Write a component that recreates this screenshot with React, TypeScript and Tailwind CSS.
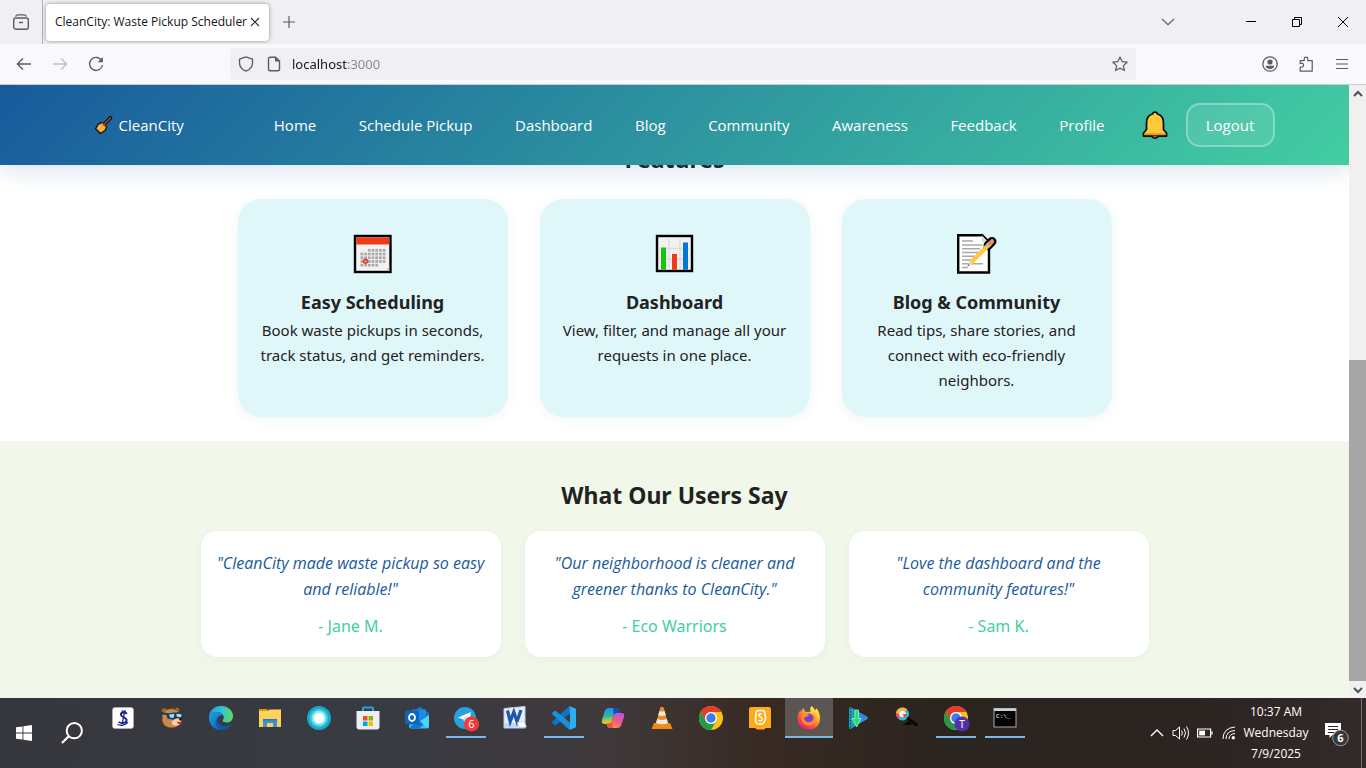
import type { ReactNode } from "react";

type IconProps = { children: ReactNode; box?: string; className?: string };

function Svg({ children, box = "0 0 24 24", className = "size-6" }: IconProps) {
  return (
    <svg viewBox={box} className={`overflow-visible ${className}`} fill="none" aria-hidden="true">
      {children}
    </svg>
  );
}

/* ---------- Browser frame ---------- */

function TabStrip() {
  return (
    <div className="flex h-11 items-center bg-[#f0eff4] font-['Open_Sans',sans-serif] text-[#5b5b66]">
      <button aria-label="Recent browsing" className="flex h-full w-[43px] items-center justify-center border-r border-[#b0afb6] pr-px">
        <Svg box="0 0 16 16" className="size-4">
          <path d="M2.600 2.600Q3 .8 5 .8h6q2 0 2.400 1.800" stroke="#5b5b66" strokeWidth="1.300" />
          <rect x=".7" y="4" width="14.600" height="11.200" rx="2" stroke="#5b5b66" strokeWidth="1.400" />
          <path d="M6 8.500h4" stroke="#5b5b66" strokeWidth="1.400" />
        </Svg>
      </button>
      <div className="ml-[3px] flex h-[37px] w-[223px] items-center justify-between rounded bg-white pl-[9px] pr-2 shadow-[0_0_4px_rgba(0,0,0,0.4)]">
        <span className="text-[12px] whitespace-nowrap text-[#15141a]">CleanCity: Waste Pickup Scheduler</span>
        <button aria-label="Close tab">
          <Svg box="0 0 16 16" className="size-4">
            <path d="m4 4 8 8M12 4l-8 8" stroke="#2b2a33" strokeWidth="1.100" />
          </Svg>
        </button>
      </div>
      <button aria-label="New tab" className="ml-3">
        <Svg box="0 0 16 16" className="size-4">
          <path d="M8 2v12M2 8h12" stroke="#5b5b66" strokeWidth="1.200" />
        </Svg>
      </button>
      <div className="ml-auto flex h-full">
        <button aria-label="List all tabs" className="mr-[37px] flex w-[46px] items-center justify-center">
          <Svg box="0 0 16 16" className="size-4">
            <path d="m2 5 6 5.600L14 5" stroke="#5b5b66" strokeWidth="1.200" />
          </Svg>
        </button>
        <button aria-label="Minimize" className="flex w-[46px] items-center justify-center">
          <Svg box="0 0 10 10" className="size-[10px]">
            <path d="M0 4.500h10" stroke="#000" />
          </Svg>
        </button>
        <button aria-label="Restore" className="flex w-[46px] items-center justify-center">
          <Svg box="0 0 10 10" className="size-[10px]">
            <path d="M.5 2.500h7v7h-7zM2.500 2.500v-2h7v7h-2" stroke="#000" />
          </Svg>
        </button>
        <button aria-label="Close" className="flex w-[46px] items-center justify-center">
          <Svg box="0 0 10 10" className="size-[10px]">
            <path d="m0 0 10 10M10 0 0 10" stroke="#000" strokeWidth="1" />
          </Svg>
        </button>
      </div>
    </div>
  );
}

function ToolButton({ label, children }: { label: string; children: ReactNode }) {
  return (
    <button aria-label={label} className="flex size-9 items-center justify-center">
      <Svg box="0 0 16 16" className="size-4">
        {children}
      </Svg>
    </button>
  );
}

function Toolbar() {
  return (
    <div className="flex h-[41px] items-center border-b border-[#cccccf] bg-[#f9f9fb] px-[6px]">
      <ToolButton label="Back">
        <path d="M15 8H1.500M7 2.400 1.400 8 7 13.600" stroke="#5b5b66" strokeWidth="1.400" />
      </ToolButton>
      <ToolButton label="Forward">
        <path d="M1 8h13.500M9 2.400 14.600 8 9 13.600" stroke="#bfbfc5" strokeWidth="1.400" />
      </ToolButton>
      <ToolButton label="Reload">
        <path d="M13.900 5A6.500 6.500 0 1 0 14.500 9" stroke="#5b5b66" strokeWidth="1.400" />
        <path d="M14.900 1v5.300H9.600z" fill="#5b5b66" />
      </ToolButton>
      <div className="mx-[116px] flex h-8 flex-1 items-center rounded bg-[#f0f0f4] px-2">
        <Svg box="0 0 16 16" className="size-4">
          <path d="M8 .9 14.500 3.200V7c0 4-2.600 6.600-6.500 8.200C4.100 13.600 1.500 11 1.500 7V3.200z" stroke="#5b5b66" strokeWidth="1.300" strokeLinejoin="round" />
        </Svg>
        <Svg box="0 0 16 16" className="ml-3 size-4">
          <path d="M9.500 1.200H4A1.500 1.500 0 0 0 2.500 2.700v10.600A1.500 1.500 0 0 0 4 14.800h8a1.500 1.500 0 0 0 1.500-1.500V5z" stroke="#5b5b66" strokeWidth="1.400" />
          <path d="M9 .8V5.500h5z" fill="#5b5b66" />
        </Svg>
        <input
          aria-label="Address"
          defaultValue="localhost:3000"
          className="ml-[10px] min-w-0 flex-1 bg-[linear-gradient(to_right,#15141a_56px,#85858d_56px)] bg-clip-text pt-[2px] text-[13px] text-transparent caret-black outline-none"
        />
        <button aria-label="Bookmark this page">
          <Svg box="0 0 16 16" className="size-4">
            <path d="m8 1 2.100 4.600 5 .6-3.700 3.400 1 5L8 12.100l-4.400 2.500 1-5L.9 6.200l5-.6z" stroke="#5b5b66" strokeWidth="1.200" strokeLinejoin="round" />
          </Svg>
        </button>
      </div>
      <ToolButton label="Account">
        <circle cx="8" cy="8" r="7.200" stroke="#5b5b66" strokeWidth="1.300" />
        <circle cx="8" cy="6" r="2.600" fill="#5b5b66" />
        <path d="M3.600 9.800h8.800Q11.500 13 8 13T3.600 9.800z" fill="#5b5b66" />
      </ToolButton>
      <ToolButton label="Extensions">
        <path d="M2.200 15.200V11h1.600a1.800 1.800 0 0 0 0-3.600H2.200V4.700h4V3a1.800 1.800 0 0 1 3.600 0v1.700h4.400v10.500z" stroke="#5b5b66" strokeWidth="1.200" strokeLinejoin="round" />
      </ToolButton>
      <ToolButton label="Open application menu">
        <path d="M2 3.500h12M2 8h12M2 12.500h12" stroke="#5b5b66" strokeWidth="1.200" />
      </ToolButton>
    </div>
  );
}

function ScrollBar() {
  return (
    <div className="flex w-[17px] shrink-0 flex-col bg-[#f0f0f0]">
      <div className="flex h-[17px] items-center justify-center">
        <Svg box="0 0 10 10" className="size-[10px]">
          <path d="m1 7 4-4 4 4" stroke="#505050" strokeWidth="2" />
        </Svg>
      </div>
      <div className="flex flex-1 flex-col">
        <div className="flex-[45]" />
        <div className="flex-[56] bg-[#a6a6a6]" />
      </div>
      <div className="flex h-[17px] items-center justify-center">
        <Svg box="0 0 10 10" className="size-[10px]">
          <path d="m1 3 4 4 4-4" stroke="#505050" strokeWidth="2" />
        </Svg>
      </div>
    </div>
  );
}

/* ---------- CleanCity page ---------- */

const links = ["Home", "Schedule Pickup", "Dashboard", "Blog", "Community", "Awareness", "Feedback", "Profile"];

function SiteHeader() {
  return (
    <header className="relative z-10 bg-[linear-gradient(135deg,#185a9d,#43cea2)] shadow-[0_4px_24px_rgba(24,90,157,0.18)]">
      <div className="mx-auto flex h-20 max-w-[1200px] items-center pl-5 font-['Open_Sans',sans-serif] text-[15px] text-white">
        <a href="#home" className="flex items-center gap-[6px]">
          <Svg box="0 0 18 18" className="size-[18px]">
            <path d="m9 8.500 6.500-6.700" stroke="#111" strokeWidth="3.800" strokeLinecap="round" />
            <path d="m7 6.400 4.600 4.500-1.500 3.600-4.600 3L.6 12.700l2.700-4.500z" fill="#f7a83c" stroke="#111" strokeWidth="1.300" strokeLinejoin="round" />
            <path d="m9 8.500 6.500-6.700" stroke="#8e562e" strokeWidth="1.500" strokeLinecap="round" />
            <path d="m3 12.500 3-3M5.500 14.500l3-3" stroke="#fbd27a" strokeWidth="1" />
            <path d="m6.600 7 4 4" stroke="#e25b28" strokeWidth="1.200" />
          </Svg>
          CleanCity
        </a>
        <nav className="ml-[90px] flex flex-1 justify-between">
          {links.map((link) => (
            <a key={link} href={`#${link.toLowerCase().replace(" ", "-")}`} className="whitespace-nowrap">
              {link}
            </a>
          ))}
        </nav>
        <button aria-label="Notifications" className="ml-[37px]">
          <Svg box="0 0 26 28" className="h-7 w-[26px]">
            <path d="M13 1.200q2 0 2.500 1.800c4.300 1.200 6 4.500 6 9v6.500l3 3.500v3H1.500v-3l3-3.500V12c0-4.500 1.700-7.800 6-9Q11 1.200 13 1.200z" fill="#ffc83d" stroke="#111" strokeWidth="1.800" strokeLinejoin="round" />
            <path d="M9.500 25.500q3.500 3.400 7 0z" fill="#9a5b2e" stroke="#111" strokeWidth="1.300" />
            <path d="M2.600 22.300h20.800v1.900H2.600z" fill="#e8960c" />
            <path d="M10.500 24.500h5q-.5 2-2.500 2t-2.500-2z" fill="#9a5b2e" />
          </Svg>
        </button>
        <button className="ml-[18px] h-11 w-[89px] rounded-[14px] border-2 border-white/30 bg-white/10">Logout</button>
      </div>
    </header>
  );
}

function CalendarIcon() {
  const dots = [
    [2, 3, 4, 5, 6],
    [0, 1, 2, 3, 4, 5, 6],
    [0, 1, 2, 3, 4, 5, 6],
    [0, 1, 2, 3, 4, 5, 6],
    [0, 1, 2, 3, 4],
  ];
  return (
    <Svg box="0 0 40 40" className="size-10">
      <rect x="2" y="2" width="35.500" height="36" fill="#f2f2f2" stroke="#000" strokeWidth="2.400" />
      <path d="M3.200 3.200h33v7.300h-33z" fill="#f03a17" />
      <path d="M32 36.800q3-1.500 4.300-5v5z" fill="#c4c4c4" />
      {dots.map((row, y) =>
        row.map((x) => <rect key={`${x}-${y}`} x={7.500 + x * 3.700} y={15 + y * 3.700} width="2.700" height="2.700" fill="#a8a8a8" />)
      )}
      <circle cx="12.500" cy="27.300" r="2" stroke="#f03a17" strokeWidth="1.500" />
    </Svg>
  );
}

function ChartIcon() {
  return (
    <Svg box="0 0 40 40" className="size-10">
      <rect x="2" y="2" width="35" height="35" fill="#f2f2f2" stroke="#000" strokeWidth="2.400" />
      <path d="M14 3.200v32.600M25 3.200v32.600M3.200 14.500h32.600M3.200 25h32.600" stroke="#dedede" strokeWidth="1.500" />
      <path d="M6 13.500h5v22.300H6z" fill="#16c60c" />
      <path d="M17 20h5v15.800h-5z" fill="#f03a17" />
      <path d="M28 8.500h5v27.300h-5z" fill="#0078d7" />
    </Svg>
  );
}

function MemoIcon() {
  return (
    <Svg box="0 0 42 42" className="size-[42px]">
      <path d="M2.200 2.200h24L33 9v30.500H2.200z" fill="#fff" stroke="#000" strokeWidth="2.400" />
      <path d="M26 2.500v6.700h6.500" fill="#ddd" />
      <path d="M6 8h11M6 12h20M6 15.700h18M6 19.500h18M6 23.300h16M6 27h14M6 30.800h21M6 34.500h6" stroke="#a9a9a9" strokeWidth="1.400" />
      <path d="M32 12.500 36 8.500" stroke="#000" strokeWidth="9" strokeLinecap="round" />
      <path d="m15.500 29 16-16" stroke="#ffc83d" strokeWidth="4.500" />
      <path d="m31.500 13 2.500-2.500" stroke="#c9ccd0" strokeWidth="4.700" />
      <path d="m34 10.500 2-2" stroke="#f08a6c" strokeWidth="4.500" strokeLinecap="round" />
      <path d="m13.900 27.400-2.400 5.800 5.600-2.600z" fill="#f8d0ae" />
      <path d="m12.300 31.200-.8 2 1.900-.8z" fill="#333" />
    </Svg>
  );
}

const features = [
  { icon: <CalendarIcon />, title: "Easy Scheduling", text: "Book waste pickups in seconds, track status, and get reminders." },
  { icon: <ChartIcon />, title: "Dashboard", text: "View, filter, and manage all your requests in one place." },
  { icon: <MemoIcon />, title: "Blog & Community", text: "Read tips, share stories, and connect with eco-friendly neighbors." },
];

const quotes = [
  { text: "\"CleanCity made waste pickup so easy and reliable!\"", author: "Jane M." },
  { text: "\"Our neighborhood is cleaner and greener thanks to CleanCity.\"", author: "Eco Warriors" },
  { text: "\"Love the dashboard and the community features!\"", author: "Sam K." },
];

function Page() {
  return (
    <div className="flex min-w-0 flex-1 flex-col overflow-hidden bg-white text-[#222]">
      <SiteHeader />
      <section className="-mt-[26px] px-5 pb-6 text-center">
        <h2 className="mb-5 text-[23px] leading-10 font-bold">Features</h2>
        <div className="flex justify-center gap-8">
          {features.map((feature) => (
            <article key={feature.title} className="w-[270px] rounded-3xl bg-[#e0f7fa] px-5 pt-[23px] pb-6 shadow-[0_2px_12px_rgba(24,90,157,0.07)]">
              <div className="flex h-16 items-center justify-center">{feature.icon}</div>
              <h3 className="text-lg leading-8 font-bold">{feature.title}</h3>
              <p className="text-[15px] leading-[25px]">{feature.text}</p>
            </article>
          ))}
        </div>
      </section>
      <section className="flex-1 bg-[#f1f8e9] px-5 pt-[34px] pb-10 text-center">
        <h2 className="mb-4 text-[23px] leading-10 font-bold">What Our Users Say</h2>
        <div className="flex justify-center gap-6">
          {quotes.map((quote) => (
            <figure key={quote.author} className="w-[300px] rounded-2xl bg-white px-3 py-[19px] text-[16px] shadow-[0_2px_8px_rgba(24,90,157,0.05)]">
              <blockquote className="mb-3 px-0 font-['Open_Sans',sans-serif] leading-[26px] text-[#185a9d] italic">{quote.text}</blockquote>
              <figcaption className="leading-6 text-[#43cea2]">- {quote.author}</figcaption>
            </figure>
          ))}
        </div>
      </section>
    </div>
  );
}

/* ---------- Desktop taskbar ---------- */

function ChromeMark() {
  return (
    <>
      <circle cx="12" cy="12" r="12" fill="#fbc116" />
      <path d="M1.600 6A12 12 0 0 1 22.400 6H12a6 6 0 0 0-5.200 3L6.800 15z" fill="#e33b2e" />
      <path d="M1.600 6A12 12 0 0 0 12 24l5.200-9A6 6 0 0 1 6.800 15z" fill="#24994a" />
      <circle cx="12" cy="12" r="6" fill="#fff" />
      <circle cx="12" cy="12" r="4.700" fill="#3b7ded" />
    </>
  );
}

type App = { name: string; open?: boolean; active?: boolean; art: ReactNode };

const apps: App[] = [
  {
    name: "Script editor",
    art: (
      <>
        <rect x="1.500" y="1.500" width="21" height="21" rx="2.500" fill="#fff" stroke="#b9b9b9" strokeWidth=".6" />
        <path d="M15.800 8c-.8-2.200-5.800-2-6 .6-.2 2.700 6 2.600 5.800 5.800-.2 3-5 3.200-8 1.600" stroke="#1c2391" strokeWidth="1.900" />
        <path d="M13.800 4.500 11.200 18M10.500 5.200h4.500M6.500 18.300c3 1.800 7.500 1 10.500-2" stroke="#1c2391" strokeWidth="1.300" />
      </>
    ),
  },
  {
    name: "Bear",
    art: (
      <>
        <circle cx="4.500" cy="5" r="3" fill="#b4743a" stroke="#5e3312" strokeWidth=".8" />
        <circle cx="17" cy="4" r="2.500" fill="#b4743a" stroke="#5e3312" strokeWidth=".8" />
        <path d="M3 6q7-6 15-1.500 3.500 4 4 9.500-2 7-10 8-8 0-10-7-.5-5 1-9z" fill="#c98a4b" stroke="#6a3c17" strokeWidth=".8" />
        <path d="m.5 6 8 1.200 11-1.200 3.500 2-.5 4.500-5.500-.5-4 1.800-5.500-1.300L6.500 9 .5 8z" fill="#173a66" />
        <path d="m9 8.500 5.500-.5-1 4-3.500-.5zM16.500 7.800l5 .4-.5 3-4.300-.5z" fill="#9fe2f7" />
        <path d="M11.500 16q3.500-4.500 9-3 2 3.500-1.500 6-6 2.500-7.500-3z" fill="#f6d2a2" />
        <circle cx="20.500" cy="13.300" r="1.400" fill="#2a1509" />
        <path d="m16.500 16 5-.3-2 3z" fill="#dc2222" />
      </>
    ),
  },
  {
    name: "Microsoft Edge",
    art: (
      <>
        <defs>
          <linearGradient id="edgeTop" x1="0" y1="8" x2="24" y2="10" gradientUnits="userSpaceOnUse">
            <stop stopColor="#2498dc" />
            <stop offset=".5" stopColor="#30c4d4" />
            <stop offset="1" stopColor="#61dc58" />
          </linearGradient>
          <linearGradient id="edgeLow" x1="0" y1="8" x2="16" y2="24" gradientUnits="userSpaceOnUse">
            <stop stopColor="#1b9de2" />
            <stop offset="1" stopColor="#0b5cad" />
          </linearGradient>
        </defs>
        <path d="M0 11.500C0 4.500 5.200 0 12 0c7 0 12 4.500 12 10.200 0 4-3 6.300-6.300 6.300-2.700 0-4.200-1-4.200-1.900 0-.8 1.300-1.400 1.300-3.100C14.800 8.500 12 6 8 6 3.500 6 0 9 0 11.500z" fill="url(#edgeTop)" />
        <path d="M0 12c0-4 4-6 8-6 3 0 6 1.500 6.600 4C13 8.500 9 9.500 8.200 14c-.6 4.500 3.800 8 8.800 7.500a12 12 0 0 1-5 2.500C5 24 0 18.500 0 12z" fill="url(#edgeLow)" />
        <path d="M9.500 11c-2 3-.5 9 6 9 3 0 5-1 7-2-2 4-6 6-10.500 6-5-2-8-9-2.500-13z" fill="#0c59a4" />
      </>
    ),
  },
  {
    name: "File Explorer",
    art: (
      <>
        <path d="M1 3h8l2 2H1z" fill="#d99a10" />
        <path d="M1 5h9l1.500-1.500H23V21H1z" fill="#ffd35c" />
        <path d="M1 8h22v13H1z" fill="#fdd05a" />
        <path d="M5 21v-8h14v8h-4v-4H9v4z" fill="#3a93da" />
        <path d="M5 13h14v1.500H5z" fill="#2276bd" />
      </>
    ),
  },
  {
    name: "Cortana",
    art: (
      <>
        <circle cx="12" cy="12" r="12" fill="#12a9cb" />
        <circle cx="12" cy="12" r="9.500" fill="#35c5dd" />
        <circle cx="12" cy="12" r="7.500" fill="#91e6ef" />
        <circle cx="12" cy="12" r="5.200" fill="#fff" />
      </>
    ),
  },
  {
    name: "Microsoft Store",
    art: (
      <>
        <path d="M7 6V2.500Q7 1.500 8 1.500h8q1 0 1 1V6" stroke="#25a7e5" strokeWidth="2" />
        <path d="M.5 5h23v15.500q0 3-3 3h-17q-3 0-3-3z" fill="#eeeeef" />
        <path d="M7 10h4.500v4.500H7z" fill="#f25022" />
        <path d="M12.500 10H17v4.500h-4.500z" fill="#7fba00" />
        <path d="M7 15.500h4.500V20H7z" fill="#00a4ef" />
        <path d="M12.500 15.500H17V20h-4.500z" fill="#ffb900" />
      </>
    ),
  },
  {
    name: "Outlook",
    art: (
      <>
        <path d="M6 7 15 .5 24 7v3H6z" fill="#1670c4" />
        <path d="M7 3.500h14v12H7z" fill="#1b8ce3" />
        <path d="M24 8v12q0 2.500-2.500 2.500H6q-2 0-2-2V13l11 3z" fill="#38c0f2" />
        <path d="M24 8 5 21q1 1.500 2.500 1.500H14L24 14z" fill="#1674cf" />
        <path d="m24 9-9 6 7 7.300q2-.3 2-2.300z" fill="#4bd5f8" />
        <rect y="4.500" width="14" height="14" rx="1.500" fill="#0f62bd" />
        <ellipse cx="7" cy="11.500" rx="3" ry="3.500" stroke="#fff" strokeWidth="1.800" />
      </>
    ),
  },
  {
    name: "Telegram",
    open: true,
    art: (
      <>
        <circle cx="11" cy="12" r="11" fill="#2ca0dc" />
        <path d="m4 11.500 13-5.500-2 11-4.500-3z" fill="#fff" />
        <path d="m9 13 6-5-4 6-.5 3z" fill="#b9d8eb" />
        <circle cx="17.500" cy="18" r="7.600" fill="#f13b3b" />
        <text x="17.500" y="22" fill="#fff" fontSize="11" textAnchor="middle" fontFamily="Noto Sans, sans-serif">6</text>
      </>
    ),
  },
  {
    name: "Word",
    art: (
      <>
        <path d="M1 2.500 22 .5V22H1z" fill="#e8effa" stroke="#b9cdea" />
        <path d="M1.500 17h20v4.500h-20z" fill="#c3d7f1" />
        <path d="m4.500 4.500 2.700 11L10.800 6l3.200 9.500L18 4" stroke="#1d57a7" strokeWidth="3.200" />
        <path d="m14 16.500 7-1 2.500 5.500H16z" fill="#fff" stroke="#a9c1e2" strokeWidth=".5" />
      </>
    ),
  },
  {
    name: "Visual Studio Code",
    open: true,
    art: (
      <>
        <path d="M17.500 0 .7 15.300 0 17l2.200 2L4 19 19 6.500z" fill="#0878c6" />
        <path d="M17.500 24 .7 8.700 0 7l2.200-2L4 5l15 12.500z" fill="#1691da" />
        <path d="M17.500 0 24 2.800v18.400L17.500 24l.5-6V6z" fill="#2bacf3" />
      </>
    ),
  },
  {
    name: "Copilot",
    art: (
      <>
        <defs>
          <linearGradient id="copA" x1="5" y1="2" x2="7" y2="18" gradientUnits="userSpaceOnUse">
            <stop stopColor="#238ee9" />
            <stop offset=".5" stopColor="#28b4ae" />
            <stop offset=".8" stopColor="#b5ce32" />
            <stop offset="1" stopColor="#f7bf28" />
          </linearGradient>
          <linearGradient id="copB" x1="20" y1="7" x2="12" y2="22" gradientUnits="userSpaceOnUse">
            <stop stopColor="#b657e8" />
            <stop offset=".5" stopColor="#ef5688" />
            <stop offset="1" stopColor="#ff9355" />
          </linearGradient>
        </defs>
        <path d="M8 2h7q2 0 2.700 2l.8 3h-3q-2 0-2.700 2l-2.300 7q-.7 2-2.500 2H3.500q-3.500 0-2.500-4L3.500 5.500Q4.500 2 8 2z" fill="url(#copA)" />
        <path d="M12 2h3q2 0 2.700 2l.8 3h-3q-2 0-2.700 2z" fill="#1648c3" />
        <path d="M16 22H9q-2 0-2.700-2l-.8-2.500H8q2 0 2.700-2l2.300-6.500q.7-2 2.500-2h5q3.500 0 2.500 4l-2.500 7.500Q19.500 22 16 22z" fill="url(#copB)" />
        <path d="M12 22H9q-2 0-2.700-2l-.8-2.500H8q2 0 2.700-2z" fill="#f34d45" />
      </>
    ),
  },
  {
    name: "VLC",
    art: (
      <>
        <path d="M4 17h16l2.500 6h-21z" fill="#f08a13" />
        <path d="M10.500 1h3l5 18q-6.500 3-13 0z" fill="#f58a1f" />
        <path d="m9.400 5-1.200 4.200q3.800 1.500 7.600 0L14.600 5q-2.600 1-5.200 0zM7.200 13l-1.200 4q6 2.500 12 0l-1.200-4q-4.800 2-9.600 0z" fill="#ececec" />
      </>
    ),
  },
  { name: "Chrome", art: <ChromeMark /> },
  {
    name: "Scratch",
    art: (
      <>
        <path d="M3 1h18q2 0 2 2v19h-5l-2 1.500H9L7 22H1V3q0-2 2-2z" fill="#ffab19" />
        <path d="M10 4.500h5q2.500 1 1.800 4 1.400 3 .2 6-1 3.800-5 3.800-4 0-4.500-3.300L8 7.500q0-2.500 2-3z" stroke="#fff" strokeWidth="1.600" />
        <path d="M14 8.500q-3-2-3.300.6c0 2 3.500 1.600 3.500 4-.3 2.600-3 2.300-3.700 1" stroke="#fff" strokeWidth="1.400" />
      </>
    ),
  },
  {
    name: "Firefox",
    open: true,
    active: true,
    art: (
      <>
        <defs>
          <linearGradient id="fox" x1="19" y1="2" x2="5" y2="22" gradientUnits="userSpaceOnUse">
            <stop stopColor="#fff04a" />
            <stop offset=".35" stopColor="#ffb02e" />
            <stop offset=".65" stopColor="#ff5a3a" />
            <stop offset="1" stopColor="#ee1d70" />
          </linearGradient>
        </defs>
        <path d="M14.500 0c2 1.300 3 3 3.500 4.500.8-.5 1-1.500 1-2.500 3 3 4 6.500 4 10.500C23 19 18.500 23.500 12 23.500S.5 19 .5 12.500C.5 9 2 6 3.500 4L4 6.500 6 2l2.500 4q3-.5 5-.1c-1-2.500 0-4.500 1-5.900z" fill="url(#fox)" />
        <circle cx="12" cy="12.500" r="5" fill="#7a3fcf" />
        <path d="M4.500 10q3-3 7-1.500 1 1.500-2 2-2.500.4-2.500 2c1 4.500 7.500 5 9 1 1-3-1-5-3-5.500 4-.5 6.500 3 5.500 6.500-1.500 4.500-6 6-9.500 4.500-4-1.700-5-5.500-4.500-9z" fill="#ff8a2b" />
      </>
    ),
  },
  {
    name: "Download Manager",
    art: (
      <>
        <path d="M3 2.500Q3 1 5 1.500L21 10.500q2 1.300 0 2.700L5 22.500q-2 .5-2-1z" fill="#2e8ce8" />
        <path d="M3 2.500Q3 1 5 1.500l5 3v15.300l-5 2.700q-2 .5-2-1z" fill="#17a2b0" />
        <path d="M4.500 2v20" stroke="#0c4d7d" strokeWidth="1.200" strokeDasharray="1.500 1.500" />
        <path d="M9 4h3.500v8.500H15L10.700 21l-4.500-8.500H9z" fill="#22df6c" stroke="#e5fff0" strokeWidth=".6" />
      </>
    ),
  },
  {
    name: "Picture Viewer",
    art: (
      <>
        <circle cx="7.500" cy="8" r="5" stroke="#27bed2" strokeWidth="3" />
        <path d="M2.500 8A5 5 0 0 1 11 4.400" stroke="#f4ba29" strokeWidth="3" />
        <path d="M4.500 12A5 5 0 0 1 2.500 7.500" stroke="#e34c71" strokeWidth="3" />
        <circle cx="7.500" cy="8" r="3.500" fill="#f4eeee" />
        <path d="M8 8h4a5 5 0 0 1-3 4z" fill="#ef4a36" />
        <path d="m12 12 10.500 7.500" stroke="#080808" strokeWidth="3" />
        <path d="m8 18.500 6-3 3 3.500z" fill="#050505" />
      </>
    ),
  },
  {
    name: "Chrome profile",
    open: true,
    art: (
      <>
        <ChromeMark />
        <circle cx="18" cy="18" r="7.600" fill="#5430a8" />
        <text x="18" y="21.500" fill="#fff" fontSize="10" textAnchor="middle" fontFamily="Noto Sans, sans-serif">T</text>
      </>
    ),
  },
  {
    name: "Command Prompt",
    open: true,
    art: (
      <>
        <rect x="1" y="2.500" width="22" height="18.500" fill="#050505" stroke="#aaa" />
        <path d="M1 2.500h22V5H1z" fill="#c9d0d5" />
        <text x="3" y="11.500" fill="#fff" fontSize="6" fontFamily="Liberation Mono, monospace">C:\_</text>
      </>
    ),
  },
];

function Taskbar() {
  return (
    <footer className="flex h-[70px] shrink-0 bg-[linear-gradient(to_right,#36373c,#393b43_28%,#3f393b_44%,#382a23_56%,#2c241f_68%,#2b2421_88%,#332a2a)] text-white">
      <button aria-label="Start" className="flex w-12 items-center justify-center">
        <Svg box="0 0 16 16" className="size-4">
          <path d="M0 2.300 6.500 1.400v6.200H0zM7.400 1.300 16 0v7.600H7.400zM0 8.400h6.500v6.200L0 13.700zM7.400 8.400H16V16l-8.600-1.300z" fill="#fff" />
        </Svg>
      </button>
      <button aria-label="Search" className="flex w-12 items-center justify-center">
        <Svg className="size-[22px]">
          <circle cx="14.500" cy="9.500" r="8.300" stroke="#fff" strokeWidth="2.200" />
          <path d="m8.500 15.500-7.500 7.500" stroke="#fff" strokeWidth="2.400" />
        </Svg>
      </button>
      <div className="ml-[3px] flex gap-px">
        {apps.map((app) => (
          <button
            key={app.name}
            aria-label={app.name}
            className={`flex h-10 w-12 flex-col items-center justify-between pt-2 ${app.active ? "bg-[#5c5653]" : ""}`}
          >
            <Svg>{app.art}</Svg>
            <span className={`h-[2px] ${app.active ? "w-12" : "w-10"} ${app.open ? "bg-[#76b9ed]" : ""}`} />
          </button>
        ))}
      </div>
      <div className="ml-auto flex items-center pr-1">
        <button aria-label="Show hidden icons" className="flex w-6 justify-center">
          <Svg box="0 0 14 14" className="size-[14px]">
            <path d="m1 10 6-6 6 6" stroke="#fff" strokeWidth="1.300" />
          </Svg>
        </button>
        <button aria-label="Volume" className="flex w-6 justify-center">
          <Svg box="0 0 18 16" className="h-4 w-[18px]">
            <path d="M1 5.500h2.500l4-3.500v12l-4-3.500H1z" stroke="#fff" />
            <path d="M9.500 5.500q1.800 2.500 0 5M12 3.500q3 4.500 0 9M14.500 1.500q4 6.500 0 13" stroke="#fff" />
          </Svg>
        </button>
        <button aria-label="Battery" className="flex w-6 justify-center">
          <Svg box="0 0 16 10" className="h-[10px] w-4">
            <path d="M.6 1h13v8H.6zM15 3.500v3" stroke="#fff" strokeWidth="1.200" />
            <path d="M2.200 2.600H8v4.800H2.200z" fill="#fff" />
          </Svg>
        </button>
        <button aria-label="Network" className="flex w-6 justify-center">
          <Svg box="0 0 14 14" className="size-[14px]">
            <path d="M1 13Q1 2 13 1M4 13q0-8 9-8.500M7 13q0-5 6-5.500" stroke="#fff" />
            <circle cx="11.300" cy="11.800" r="1.700" fill="#fff" />
          </Svg>
        </button>
        <div className="w-[70px] pb-px text-center font-['Open_Sans',sans-serif] text-[12px] leading-[21px]">
          <div>10:37 AM</div>
          <div>Wednesday</div>
          <div>7/9/2025</div>
        </div>
        <button aria-label="Notifications" className="mr-[10px] ml-[10px] flex w-[30px] justify-center">
          <Svg box="0 0 26 26" className="size-[26px]">
            <path d="M2 3h16v12H9.500L6.500 18v-3H2z" fill="#fff" />
            <path d="M5 6.500h10M5 9.500h10M5 12.500h6" stroke="#2b2421" strokeWidth="1.200" />
            <circle cx="17.500" cy="18" r="7.800" fill="#38383a" stroke="#999" />
            <text x="17.500" y="22" fill="#fff" fontSize="11" fontWeight="700" textAnchor="middle" fontFamily="Noto Sans, sans-serif">6</text>
          </Svg>
        </button>
        <div className="h-full w-px bg-[#77716f]" />
      </div>
    </footer>
  );
}

export default function App() {
  return (
    <div className="flex min-h-screen flex-col font-['Noto_Sans','Open_Sans',sans-serif]">
      <TabStrip />
      <Toolbar />
      <main className="flex flex-1">
        <Page />
        <ScrollBar />
      </main>
      <Taskbar />
    </div>
  );
}
